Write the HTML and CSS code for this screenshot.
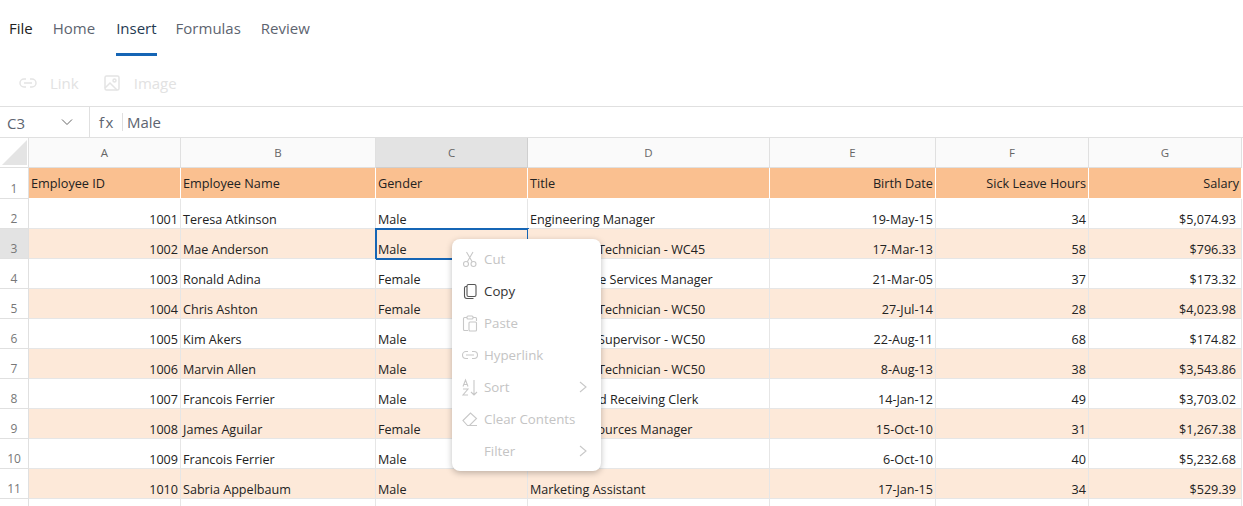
FILE: index.html
```html
<!DOCTYPE html>
<html lang="en">
  <head>
    <meta charset="UTF-8" />
    <title>Spreadsheet</title>
    <link rel="stylesheet" href="styles.css">
  </head>
  <body>
    <div id="content">
      <nav class="tabs">
        <span class="tab tab-file">File</span>
        <span class="tab">Home</span>
        <span class="tab tab-active">Insert</span>
        <span class="tab">Formulas</span>
        <span class="tab">Review</span>
      </nav>

      <div class="toolbar">
        <span class="tool">
          <svg width="20" height="20" viewBox="0 0 20 20" fill="none" stroke="#e4e4e4" stroke-width="1.5"><path d="M8 6H6a4 4 0 0 0 0 8h2M12 6h2a4 4 0 0 1 0 8h-2M6 10h8"/></svg>
          <span>Link</span>
        </span>
        <span class="tool">
          <svg width="20" height="20" viewBox="0 0 20 20" fill="none" stroke="#e4e4e4" stroke-width="1.5"><rect x="3" y="3" width="14" height="14" rx="1.5"/><circle cx="12.5" cy="7.5" r="1.5"/><path d="M3 15l5-5 7 7"/></svg>
          <span>Image</span>
        </span>
      </div>

      <div class="formula-bar">
        <div class="name-box">
          <span class="name-text">C3</span>
          <svg width="14" height="14" viewBox="0 0 14 14" fill="none" stroke="#666" stroke-width="1"><path d="M2 4.5l5 5 5-5"/></svg>
        </div>
        <span class="fx">fx</span>
        <span class="formula-value">Male</span>
      </div>

      <div class="sheet">
        <div class="corner"><div class="corner-mark"></div></div>
        <div class="col-head">A</div>
        <div class="col-head">B</div>
        <div class="col-head col-selected">C</div>
        <div class="col-head">D</div>
        <div class="col-head">E</div>
        <div class="col-head">F</div>
        <div class="col-head">G</div>

        <div class="row-head row-tall">1</div>
        <div class="cell title">Employee ID</div>
        <div class="cell title">Employee Name</div>
        <div class="cell title">Gender</div>
        <div class="cell title">Title</div>
        <div class="cell title num">Birth Date</div>
        <div class="cell title num">Sick Leave Hours</div>
        <div class="cell title num">Salary</div>

        <div class="row-head">2</div>
        <div class="cell num">1001</div>
        <div class="cell">Teresa Atkinson</div>
        <div class="cell">Male</div>
        <div class="cell">Engineering Manager</div>
        <div class="cell num">19-May-15</div>
        <div class="cell num">34</div>
        <div class="cell num money">$5,074.93</div>

        <div class="row-head row-selected">3</div>
        <div class="cell band num">1002</div>
        <div class="cell band">Mae Anderson</div>
        <div class="cell band active">Male</div>
        <div class="cell band">Production Technician - WC45</div>
        <div class="cell band num">17-Mar-13</div>
        <div class="cell band num">58</div>
        <div class="cell band num money">$796.33</div>

        <div class="row-head">4</div>
        <div class="cell num">1003</div>
        <div class="cell">Ronald Adina</div>
        <div class="cell">Female</div>
        <div class="cell">Maintenance Services Manager</div>
        <div class="cell num">21-Mar-05</div>
        <div class="cell num">37</div>
        <div class="cell num money">$173.32</div>

        <div class="row-head">5</div>
        <div class="cell band num">1004</div>
        <div class="cell band">Chris Ashton</div>
        <div class="cell band">Female</div>
        <div class="cell band">Production Technician - WC50</div>
        <div class="cell band num">27-Jul-14</div>
        <div class="cell band num">28</div>
        <div class="cell band num money">$4,023.98</div>

        <div class="row-head">6</div>
        <div class="cell num">1005</div>
        <div class="cell">Kim Akers</div>
        <div class="cell">Male</div>
        <div class="cell">Production Supervisor - WC50</div>
        <div class="cell num">22-Aug-11</div>
        <div class="cell num">68</div>
        <div class="cell num money">$174.82</div>

        <div class="row-head">7</div>
        <div class="cell band num">1006</div>
        <div class="cell band">Marvin Allen</div>
        <div class="cell band">Male</div>
        <div class="cell band">Production Technician - WC50</div>
        <div class="cell band num">8-Aug-13</div>
        <div class="cell band num">38</div>
        <div class="cell band num money">$3,543.86</div>

        <div class="row-head">8</div>
        <div class="cell num">1007</div>
        <div class="cell">Francois Ferrier</div>
        <div class="cell">Male</div>
        <div class="cell">Shipping and Receiving Clerk</div>
        <div class="cell num">14-Jan-12</div>
        <div class="cell num">49</div>
        <div class="cell num money">$3,703.02</div>

        <div class="row-head">9</div>
        <div class="cell band num">1008</div>
        <div class="cell band">James Aguilar</div>
        <div class="cell band">Female</div>
        <div class="cell band">Human Resources Manager</div>
        <div class="cell band num">15-Oct-10</div>
        <div class="cell band num">31</div>
        <div class="cell band num money">$1,267.38</div>

        <div class="row-head">10</div>
        <div class="cell num">1009</div>
        <div class="cell">Francois Ferrier</div>
        <div class="cell">Male</div>
        <div class="cell">Scheduler</div>
        <div class="cell num">6-Oct-10</div>
        <div class="cell num">40</div>
        <div class="cell num money">$5,232.68</div>

        <div class="row-head">11</div>
        <div class="cell band num">1010</div>
        <div class="cell band">Sabria Appelbaum</div>
        <div class="cell band">Male</div>
        <div class="cell band">Marketing Assistant</div>
        <div class="cell band num">17-Jan-15</div>
        <div class="cell band num">34</div>
        <div class="cell band num money">$529.39</div>

        <div class="row-head"></div>
        <div class="cell"></div>
        <div class="cell"></div>
        <div class="cell"></div>
        <div class="cell"></div>
        <div class="cell"></div>
        <div class="cell"></div>
        <div class="cell"></div>
      </div>

      <ul class="menu">
        <li class="menu-item">
          <svg width="20" height="20" viewBox="0 0 20 20" fill="none" stroke="#c8c8c8" stroke-width="1.1"><circle cx="6" cy="15" r="2.5"/><circle cx="13.5" cy="15" r="2.5"/><path d="M7.3 12.8L13 3M12.2 12.8L6.5 3"/></svg>
          Cut
        </li>
        <li class="menu-item menu-enabled">
          <svg width="20" height="20" viewBox="0 0 20 20" fill="none" stroke="#555" stroke-width="1.1"><rect x="7" y="3.5" width="9" height="12" rx="1.5"/><path d="M7 5.5H6a1.5 1.5 0 0 0-1.5 1.5v8A2.5 2.5 0 0 0 7 17.5h6.5"/></svg>
          Copy
        </li>
        <li class="menu-item">
          <svg width="20" height="20" viewBox="0 0 20 20" fill="none" stroke="#c8c8c8" stroke-width="1.1"><path d="M7 4.5H4.5a1 1 0 0 0-1 1v11a1 1 0 0 0 1 1H8M13 4.5h2.5a1 1 0 0 1 1 1V8"/><rect x="7" y="3" width="6" height="3" rx="1"/><rect x="9" y="9" width="7.5" height="9" rx="1"/></svg>
          Paste
        </li>
        <li class="menu-item">
          <svg width="20" height="20" viewBox="0 0 20 20" fill="none" stroke="#c8c8c8" stroke-width="1.1"><path d="M8 6.5H6a3.5 3.5 0 0 0 0 7h2M12 6.5h2a3.5 3.5 0 0 1 0 7h-2M6 10h8"/></svg>
          Hyperlink
        </li>
        <li class="menu-item">
          <svg width="20" height="20" viewBox="0 0 20 20" fill="none" stroke="#c8c8c8" stroke-width="1.1"><path d="M3 9.5L5.5 3 8 9.5M3.8 7.5h3.4M3 12h5l-5 6h5M14 3v15M11 15l3 3 3-3"/></svg>
          Sort
          <svg class="menu-arrow" width="12" height="14" viewBox="0 0 12 14" fill="none" stroke="#c8c8c8" stroke-width="1.1"><path d="M3 2l6 5-6 5"/></svg>
        </li>
        <li class="menu-item">
          <svg width="20" height="20" viewBox="0 0 20 20" fill="none" stroke="#c8c8c8" stroke-width="1.1"><path d="M3 11.5L10.5 4l6 5.5-7 7H7.5zM7 16.5h10"/></svg>
          Clear Contents
        </li>
        <li class="menu-item">
          <span class="menu-icon-gap"></span>
          Filter
          <svg class="menu-arrow" width="12" height="14" viewBox="0 0 12 14" fill="none" stroke="#c8c8c8" stroke-width="1.1"><path d="M3 2l6 5-6 5"/></svg>
        </li>
      </ul>
    </div>
  </body>
</html>
```

FILE: styles.css
```css
body {
  font-family: "Open Sans", "Noto Sans", sans-serif;
  color: #222;
  margin: 0;
  background-color: #fff;
  overflow: hidden;
}

#content {
  position: relative;
  height: 506px;
  overflow: hidden;
}

.tabs {
  display: flex;
  gap: 20px;
  height: 56px;
  padding-left: 9px;
  font-size: 15px;
}

.tab {
  color: #5d6470;
  line-height: 56px;
}

.tab-file {
  color: #222;
}

.tab-active {
  color: #243a52;
  border-bottom: 3px solid #1565b5;
  height: 53px;
  margin-left: 1px;
  margin-right: -1px;
}

.toolbar {
  display: flex;
  gap: 23px;
  height: 47px;
  padding-top: 3px;
  padding-left: 18px;
  align-items: center;
  border-bottom: 1px solid #e0e0e0;
}

.tool {
  display: flex;
  align-items: center;
  gap: 12px;
  color: #e2e2e2;
  font-size: 15px;
}

.formula-bar {
  display: flex;
  align-items: center;
  height: 30px;
  border-bottom: 1px solid #e0e0e0;
  color: #5d6470;
  font-size: 15px;
}

.name-box {
  display: flex;
  align-items: center;
  justify-content: space-between;
  width: 90px;
  height: 100%;
  padding: 0 15px 0 7px;
  border-right: 1px solid #e0e0e0;
  box-sizing: border-box;
}

.name-text {
  padding-top: 2px;
}

.fx {
  margin-left: 9px;
  padding-right: 7px;
  border-right: 1px solid #e0e0e0;
  letter-spacing: 1.5px;
  line-height: 18px;
}

.formula-value {
  margin-left: 4px;
}

.sheet {
  display: grid;
  grid-template-columns: 29px 152px 195px 152px 242px 166px 153px 153px;
  grid-template-rows: 30px 31px repeat(11, 30px);
  font-size: 12.6px;
}

.corner {
  background-color: #fff;
  border-right: 1px solid #e0e0e0;
  border-bottom: 1px solid #e0e0e0;
  box-sizing: border-box;
  padding: 2px;
}

.corner-mark {
  width: 25px;
  height: 25px;
  background-color: #e4e4e4;
  clip-path: polygon(100% 0, 100% 100%, 0 100%);
}

.col-head {
  display: flex;
  align-items: center;
  justify-content: center;
  background-color: #fafafa;
  color: #666;
  font-size: 11.5px;
  border-right: 1px solid #e0e0e0;
  border-bottom: 1px solid #e0e0e0;
  box-sizing: border-box;
}

.col-selected {
  background-color: #e3e3e3;
  border-color: #cfcfcf;
}

.row-head {
  display: flex;
  align-items: flex-end;
  justify-content: center;
  padding-bottom: 1px;
  color: #777;
  font-size: 12px;
  background-color: #fff;
  border-right: 1px solid #e0e0e0;
  border-bottom: 1px solid #e0e0e0;
  box-sizing: border-box;
}

.row-selected {
  background-color: #e3e3e3;
}

.cell {
  display: flex;
  align-items: flex-end;
  padding: 0 2px;
  color: #222;
  white-space: nowrap;
  border-right: 1px solid #e6e6e6;
  border-bottom: 1px solid #e6e6e6;
  box-sizing: border-box;
}

.num {
  justify-content: flex-end;
}

.money {
  padding-right: 5px;
}

.title {
  align-items: center;
  font-size: 12.7px;
  background-color: #fac090;
  border-color: #fff;
}

.band {
  background-color: #fde9d9;
}

.active {
  outline: 2px solid #1565b5;
  outline-offset: -1px;
}

.menu {
  position: absolute;
  left: 452px;
  top: 239px;
  width: 149px;
  margin: 0;
  padding: 4px 0;
  list-style: none;
  background-color: #fff;
  border-radius: 8px;
  box-shadow: 0 2px 6px rgba(0, 0, 0, 0.25);
  font-size: 13.3px;
}

.menu-item {
  display: flex;
  align-items: center;
  gap: 4px;
  height: 32px;
  padding-left: 8px;
  color: #c4c4c4;
}

.menu-enabled {
  color: #333;
}

.menu-icon-gap {
  width: 20px;
}

.menu-arrow {
  margin-left: auto;
  margin-right: 12px;
}
```
